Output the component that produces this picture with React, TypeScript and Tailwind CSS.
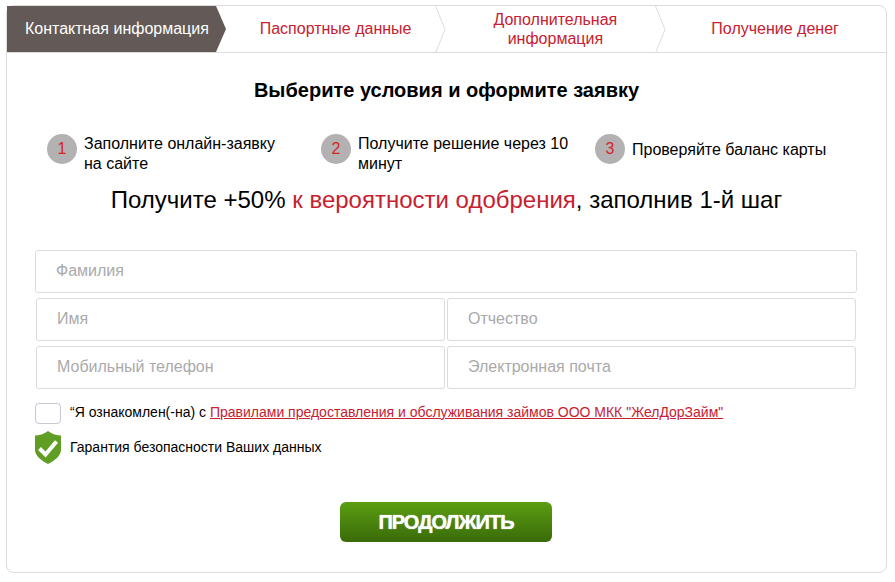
const font = "font-['Liberation_Sans',Arial,sans-serif]";

const tabs = ['Паспортные данные', 'Дополнительная информация', 'Получение денег'];

const steps = [
  { n: 1, text: 'Заполните онлайн-заявку на сайте' },
  { n: 2, text: 'Получите решение через 10 минут' },
  { n: 3, text: 'Проверяйте баланс карты' },
];

function Chevron() {
  return (
    <svg className="absolute right-0 top-0 h-[47px] w-[11px]" viewBox="0 0 11 47" fill="none">
      <path d="M0.5 0 L10 23.5 L0.5 47" stroke="#dcdcdc" strokeWidth="1" />
    </svg>
  );
}

function Field({ label, grow }: { label: string; grow?: boolean }) {
  return (
    <div
      className={`flex h-[43px] items-center rounded-[3px] border border-[#dcdcdc] bg-white pb-0.5 pl-5 text-base text-[#aaaaaa] ${grow ? 'flex-1' : ''}`}
    >
      {label}
    </div>
  );
}

export default function App() {
  return (
    <div className={`${font} h-[582px] w-[895px] overflow-hidden bg-white pl-[6px] pt-[5px] text-black`}>
      <div className="h-[568px] w-[881px] rounded-lg border border-[#dcdcdc]">
        <div className="flex h-[47px] border-b border-[#dcdcdc]">
          <div className="flex w-[220px] items-center bg-[#635a58] pl-[18px] text-base text-white [clip-path:polygon(0_0,209px_0,219px_50%,209px_100%,0_100%)]">
            Контактная информация
          </div>
          {tabs.map((t, i) => (
            <div
              key={t}
              className="relative flex w-[220px] items-center justify-center pb-px pl-[30px] pr-8 text-center text-base leading-[19px] text-[#c8202f]"
            >
              {t}
              {i < 2 && <Chevron />}
            </div>
          ))}
        </div>

        <h1 className="mt-[25px] text-center text-xl font-bold leading-6">Выберите условия и оформите заявку</h1>

        <div className="mt-8 flex pl-10">
          {steps.map((s) => (
            <div key={s.n} className="flex w-[274px] items-start gap-[7px]">
              <div className="flex h-[30px] w-[30px] shrink-0 items-center justify-center rounded-full bg-[#b3b1b1] text-base text-[#d9232e]">
                {s.n}
              </div>
              <div className="flex min-h-8 w-[212px] items-center text-base leading-5">{s.text}</div>
            </div>
          ))}
        </div>

        <p className="mt-3 text-center text-2xl leading-7">
          Получите +50% <span className="text-[#c8202f]">к вероятности одобрения</span>, заполнив 1-й шаг
        </p>

        <div className="mt-[36px] flex flex-col gap-[5px] pl-7 pr-[29px]">
          <Field label="Фамилия" />
          <div className="flex gap-[2px] px-px">
            <Field grow label="Имя" />
            <Field grow label="Отчество" />
          </div>
          <div className="flex gap-[2px] px-px">
            <Field grow label="Мобильный телефон" />
            <Field grow label="Электронная почта" />
          </div>
        </div>

        <div className="mt-[13px] flex items-center gap-[9px] pl-7 text-sm">
          <div className="h-[21px] w-[26px] rounded-[4px] border border-[#c5c9d3] bg-white" />
          <span className="pb-0.5">
            “Я ознакомлен(-на) с{' '}
            <span className="text-[#c8202f] underline">
              Правилами предоставления и обслуживания займов ООО МКК "ЖелДорЗайм"
            </span>
          </span>
        </div>

        <div className="mt-[7px] flex items-center gap-[9px] pl-7 text-sm">
          <svg className="h-[33px] w-[26px]" viewBox="0 0 26 33">
            <path d="M13 0 C17 3 22 4.5 26 4.5 V19 C26 25 19 30 13 33 C7 30 0 25 0 19 V4.5 C4 4.5 9 3 13 0 Z" fill="#5f9e23" />
            <path d="M4.5 17.5 L10.5 23.5 L21.5 10.5" fill="none" stroke="#ffffff" strokeWidth="4" />
          </svg>
          <span className="pb-0.5">Гарантия безопасности Ваших данных</span>
        </div>

        <div className="mt-[38px] flex justify-center pr-[1px]">
          <div className="flex h-10 w-[212px] items-center justify-center rounded-md bg-gradient-to-b from-[#5b9e12] to-[#3a6b0a] text-xl font-bold tracking-[-1px] text-white [text-shadow:0_0_1px_#ffffff]">
            ПРОДОЛЖИТЬ
          </div>
        </div>
      </div>
    </div>
  );
}
